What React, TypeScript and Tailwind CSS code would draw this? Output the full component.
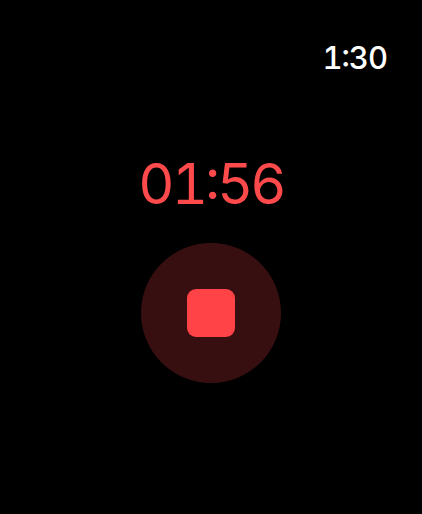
export default function App() {
  return (
    <div className="flex h-[514px] w-[422px] flex-col bg-black font-['Inter',sans-serif]">
      <div className="flex justify-end pt-[39px] pr-[35px]">
        <span className="text-[31px] leading-[38px] font-medium tracking-[-1px] tabular-nums text-white [font-feature-settings:'case','tnum']">1:30</span>
      </div>
      <div className="mt-[75px] flex flex-col items-center">
        <span className="text-[56px] leading-[64px] font-normal tracking-[-3px] tabular-nums text-[#ff4a4c] [font-feature-settings:'case','tnum']">01:56</span>
        <button className="mt-[27px] flex h-[140px] w-[140px] items-center justify-center rounded-full bg-[#380f10]">
          <span className="h-[48px] w-[48px] rounded-[9px] bg-[#ff4346]" />
        </button>
      </div>
    </div>
  );
}
